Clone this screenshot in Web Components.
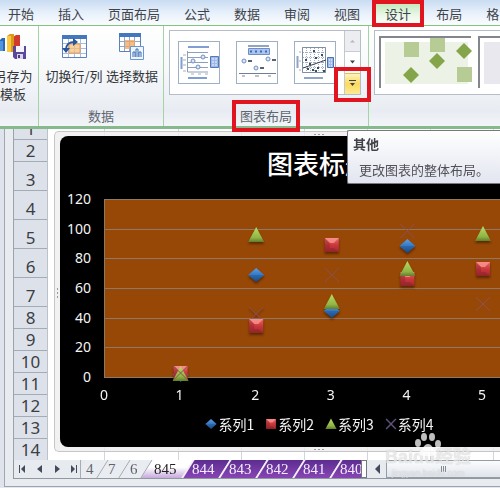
<!DOCTYPE html>
<html lang="zh-CN">
<head>
<meta charset="utf-8">
<title>图表布局</title>
<style>
  html, body { margin: 0; }
  body { font: 13px/18px "Noto Sans CJK SC", "Liberation Sans", sans-serif; color: #404348; overflow: hidden; background: #e4e8ee; }
</style>
</head>
<body>
<excel-window></excel-window>

<script>
const define = (name, html) => {
  const template = document.createElement('template');
  template.innerHTML = html;
  customElements.define(name, class extends HTMLElement {
    constructor() {
      super();
      this.attachShadow({ mode: 'open' }).append(template.content.cloneNode(true));
    }
  });
};

define('mark-box', `
<style>
  :host { display: block; position: absolute; inset: 0; border: 4px solid #e0151f; box-sizing: border-box; pointer-events: none; z-index: 3; }
</style>`);

define('ribbon-tab', `
<style>
  :host { display: block; position: relative; flex: none; }
  button { all: unset; display: block; padding: 3px 12px 0; height: 22px; font: inherit; white-space: nowrap; color: #3f434a; }
  :host([selected]) { border: 1px solid #8ec98e; border-width: 0 1px; background: linear-gradient(#b8e3b0, #eaf7e6 60%, #fff); }
</style>
<button role="tab" type="button"><slot></slot></button><slot name="mark"></slot>`);

define('ribbon-tabs', `
<style>
  :host { display: block; border-bottom: 1px solid #7fc67f; background: linear-gradient(#c8dcf2, #e4eefa 45%, #fbfdff); }
  nav { display: flex; }
  ribbon-tab:first-child { margin-left: -4px; }
  ribbon-tab mark-box { inset: 0 -1px -2px; }
</style>
<nav role="tablist">
  <ribbon-tab>开始</ribbon-tab><ribbon-tab>插入</ribbon-tab><ribbon-tab>页面布局</ribbon-tab><ribbon-tab>公式</ribbon-tab><ribbon-tab>数据</ribbon-tab><ribbon-tab>审阅</ribbon-tab><ribbon-tab>视图</ribbon-tab><ribbon-tab selected>设计<mark-box slot="mark"></mark-box></ribbon-tab><ribbon-tab>布局</ribbon-tab><ribbon-tab>格式</ribbon-tab>
</nav>`);

define('ribbon-group', `
<style>
  :host { display: flex; flex-direction: column; justify-content: space-between; box-sizing: border-box; height: 100px; border-right: 1px solid #a5d3a5; flex: none; }
  .body { display: flex; }
  footer { text-align: center; color: #5f6670; height: 20px; line-height: 20px; }
  footer span { position: relative; display: inline-block; }
  ::slotted(mark-box) { inset: -6px -8px -6px; }
</style>
<div class="body"><slot></slot></div>
<footer><span><slot name="label"></slot><slot name="mark"></slot></span></footer>`);

define('ribbon-command', `
<style>
  :host { display: block; }
  button { all: unset; display: flex; flex-direction: column; align-items: center; gap: 6px; width: 100%; padding-top: 7px; font: inherit; text-align: center; white-space: nowrap; color: #33363b; }
</style>
<button type="button"><slot name="icon"></slot><span><slot></slot></span></button>`);

define('layout-gallery', `
<style>
  :host { display: flex; border: 1px solid #b7bdc6; background: #fff; height: 63px; box-sizing: content-box; }
  .items { display: flex; gap: 16px; padding: 10px 8px; }
  button { all: unset; display: block; }
  .items button { width: 40px; height: 41px; border: 1px solid #9fb0c4; }
  .items svg { display: block; }
  .scroll { display: flex; flex-direction: column; width: 15px; border-left: 1px solid #c3c8cf; }
  .scroll button { position: relative; flex: 1; display: flex; align-items: center; justify-content: center; background: #fff; }
  .scroll button:first-child { background: #ebedf0; }
  .scroll button + button { border-top: 1px solid #c9cdd3; }
  .scroll .more { background: linear-gradient(#fdf3bd, #fbd95f 50%, #fdea94); border-color: #e0bd55; }
  mark-box { inset: -7px -11px -8px; }
</style>
<div class="items">
  <button type="button" aria-label="布局 1"><svg width="40" height="41" fill="none" stroke="#6f8fc4">
    <path d="M9 5h21M9 36h19" stroke="#7f9fd2" stroke-width="2"/><path d="M8.500 9v21H29M8 10.500h21M8 15.500h21M8 20.500h21M8 25.500h21" stroke="#8ea0b8"/>
    <path d="M2.500 15v12" stroke="#7f9fd2" stroke-width="2"/><path d="M4 13h3M4 18h3M4 23h3M4 29h3M12 32h3M19 32h3M26 32h3" stroke="#a8afb9"/>
    <g fill="#dce8f8"><circle cx="14" cy="19" r="2"/><circle cx="24" cy="15" r="2"/><circle cx="19" cy="25" r="2"/></g>
    <path d="M31.500 14.500h8v11h-8z" fill="#9db9ea" stroke="#5578b8"/><path d="M33 17h5M33 20h5M33 23h5" stroke="#eef4ff" stroke-dasharray="2 1"/></svg></button>
  <button type="button" aria-label="布局 2"><svg width="40" height="41" fill="none" stroke="#6f8fc4">
    <path d="M11 4h21" stroke="#8fa5c4" stroke-width="2"/><path d="M11.500 6.500h21v6h-21z" fill="#a9c4f0"/><path d="M13 9.500h18" stroke="#436bab" stroke-width="2" stroke-dasharray="2 3"/>
    <g fill="#dce8f8"><circle cx="7" cy="19" r="2"/><circle cx="31" cy="17" r="2"/><circle cx="19" cy="26" r="2"/></g>
    <path d="M11 19h4M35 18h4M23 26h4" stroke="#5a6470" stroke-width="2"/><path d="M2 31.500h37" stroke="#6f7f95"/><path d="M5 34h3M18 34h4M31 34h3" stroke="#7b8692"/></svg></button>
  <button type="button" aria-label="布局 3"><svg width="40" height="41" fill="none" stroke="#a3afbd">
    <path d="M7.500 5.500h23v25h-23zM11.500 6v24M15.500 6v24M19.500 6v24M23.500 6v24M27.500 6v24M8 10.500h22M8 15.500h22M8 20.500h22M8 25.500h22" stroke-dasharray="1 1"/>
    <path d="M7.500 5.500h23v25h-23z" stroke="#7f8ea1"/><path d="M8 26 31 18" stroke="#39424e"/>
    <g fill="#374c66" stroke="none"><path d="M18 8h2v2h-2zM26 12h2v2h-2zM10 17h2v2h-2zM20 15h2v2h-2zM14 21h2v2h-2zM12 26h2v2h-2zM17 27h2v2h-2zM22 25h2v2h-2zM28 28h2v2h-2zM20 28h2v2h-2z"/></g>
    <path d="M2.500 14v12M9 36h19" stroke="#8fa5c4" stroke-width="2"/><path d="M4 10h2M4 19h2M4 28h2" stroke="#a8afb9"/>
    <path d="M32.500 15.500h6v10h-6z" fill="#9db9ea" stroke="#4d70b4"/><path d="M34 18h4M34 21h4M34 24h4" stroke="#fff" stroke-dasharray="1 1"/></svg></button>
</div>
<div class="scroll">
  <button type="button" aria-label="上一行"><svg width="7" height="4"><path d="M1 3.500 3.500 1 6 3.500z" fill="#b3b6bb"/></svg></button>
  <button type="button" aria-label="下一行"><svg width="7" height="4"><path d="M1 .5h5L3.500 3.500z" fill="#3f4349"/></svg></button>
  <button type="button" class="more" aria-label="其他"><svg width="7" height="7"><path d="M0 0h7v1H0zM1 3h5L3.500 6z" fill="#3f4349"/></svg><mark-box></mark-box></button>
</div>`);

define('style-gallery', `
<style>
  :host { display: flex; gap: 7px; flex: 1; min-width: 0; box-sizing: border-box; height: 65px; padding: 5px 0 0 4px; border: 1px solid #b7bdc6; border-right: 0; background: #fff; overflow: hidden; }
  button { all: unset; flex: none; height: 46px; width: 86px; padding: 4px 0 0 4px; border: solid #83878d; border-width: 2px 0 0 2px; }
  svg { display: block; }
</style>
<button type="button" aria-label="样式 1"><svg width="87" height="47" overflow="visible"><path d="M0 0h83v42H0z" fill="#edf2e7"/><path d="M19 0h15v15H19zM45-4h15v14H45zM72 25h15v15H72z" fill="#b7cc94"/><path d="M52 11l8 8-8 8-8-8zM79 1l8 8-8 8-8-8zM26 25l8 8-8 8-8-8z" fill="#84a54a"/></svg></button>
<button type="button" aria-label="样式 2"><svg width="87" height="47"><path d="M0 0h83v42H0z" fill="#e9e8ee"/><path d="M26 25l8 8-8 8-8-8z" fill="#777"/></svg></button>`);

define('excel-ribbon', `
<style>
  :host { display: block; border-bottom: 3px solid #86b98c; }
  .groups { display: flex; background: linear-gradient(#fff, #f6f8fa 45%, #e8ecf2 85%, #f2f5f8); }
  .save { width: 39px; }
  .save ribbon-command { width: 26px; }
  .data { width: 125px; }
  .data ribbon-command:first-child { margin-left: 6px; }
  .data ribbon-command { width: 58px; }
  .layout { width: 205px; }
  layout-gallery { margin: 4px 0 0 5px; }
  .style { flex: 1; min-width: 0; border: 0; }
  style-gallery { margin: 4px 0 0 5px; }
</style>
<ribbon-tabs></ribbon-tabs>
<div class="groups">
  <ribbon-group class="save">
    <ribbon-command>另存为<br>模板
      <svg slot="icon" width="28" height="28"><path d="M14 4l3-2h4v16h-7z" fill="#d23b2c"/><path d="M0 8l3-3h3v13H0z" fill="#2c67b6"/><path d="M0 8h4v10H0z" fill="#4f96df"/><path d="M8 3l3-2h4v18H8z" fill="#d89a17"/><path d="M8 3h4v16H8z" fill="#f8c940"/><path d="M14 13h13v13H16l-2-2z" fill="#5c489b"/><path d="M17 13h8v6h-8z" fill="#f5f3fb"/><path d="M18 21h6v5h-6z" fill="#d9d5e9"/><path d="M19 22h2v3h-2z" fill="#4b3c83"/></svg>
    </ribbon-command>
  </ribbon-group>
  <ribbon-group class="data">
    <ribbon-command>切换行/列
      <svg slot="icon" width="28" height="28"><path d="M2.500 2.500h24v22h-24z" fill="#fff" stroke="#5b82bd"/><path d="M2 2h25v4H2z" fill="#4577bf"/><path d="M8.500 6v18M14.500 6v18M20.500 6v18M3 10.500h23M3 15.500h23M3 20.500h23" stroke="#a8bdd9"/><path d="M9 11h11v9H9z" fill="#f5bf7d" fill-opacity=".75" stroke="#e69e56"/><path d="M6 17c0-7 4-8 9-8" fill="none" stroke="#28559c" stroke-width="2"/><path d="M13 5l5 4-5 4zM2 15h8l-4 5z" fill="#28559c"/></svg>
    </ribbon-command>
    <ribbon-command>选择数据
      <svg slot="icon" width="28" height="28"><path d="M1.500 1.500h21v17h-21z" fill="#fff" stroke="#5b82bd"/><path d="M1 0h22v4H1z" fill="#4577bf"/><path d="M6.500 4v14M11.500 4v14M16.500 4v14M2 8.500h20M2 13.500h20" stroke="#8ea9cf"/><path d="M7 7h10v9H7z" fill="#f3a65b" fill-opacity=".75"/><path d="M12.500 13.500h13v13h-13z" fill="#eef5ff" stroke="#6c96cf"/><path d="M15 24v-5h2v5M18 24v-8h2v8M21 24v-5h2v5" fill="none" stroke="#3d6cad"/></svg>
    </ribbon-command>
    <span slot="label">数据</span>
  </ribbon-group>
  <ribbon-group class="layout">
    <layout-gallery></layout-gallery>
    <span slot="label">图表布局</span><mark-box slot="mark"></mark-box>
  </ribbon-group>
  <ribbon-group class="style"><style-gallery></style-gallery></ribbon-group>
</div>`);

define('tool-tip', `
<style>
  :host { display: block; padding: 4px 5px 4px; border: 1px solid #767a80; border-right: 0; border-radius: 2px 0 0 2px; background: linear-gradient(#fff, #e3e5f0); box-shadow: 3px 4px 3px #0006; box-sizing: border-box; }
  strong { display: block; }
  p { margin: 8px 0 0 6px; white-space: nowrap; color: #515157; }
</style>
<strong><slot name="title"></slot></strong><p><slot></slot></p>`);

define('row-headers', `
<style>
  :host { display: block; }
  ol { list-style: none; margin: 0; padding: 0; font: 17px/20px "Noto Sans", sans-serif; color: #3b3e43; text-align: center; }
  li { display: flex; align-items: flex-end; justify-content: center; box-sizing: border-box; height: 22px; border-bottom: 1px solid #a4abb5; }
  li:first-child { height: 11px; overflow: hidden; }
  li.tall { height: 29px; }
</style>
<ol><li>1</li><li>2</li><li class="tall">3</li><li class="tall">4</li><li class="tall">5</li><li class="tall">6</li><li class="tall">7</li><li>8</li><li>9</li><li>10</li><li>11</li><li>12</li><li>13</li><li>14</li></ol>`);

const gradients = `
<linearGradient id="gb" x1="0" y1="0" x2="0" y2="1"><stop offset="0" stop-color="#5d9fe6"/><stop offset=".5" stop-color="#3478c4"/><stop offset="1" stop-color="#1d4c89"/></linearGradient>
<linearGradient id="gr" x1="0" y1="0" x2="0" y2="1"><stop offset="0" stop-color="#ea6668"/><stop offset=".5" stop-color="#c9383d"/><stop offset="1" stop-color="#a3292d"/></linearGradient>
<linearGradient id="gg" x1="0" y1="0" x2="0" y2="1"><stop offset="0" stop-color="#b7dc66"/><stop offset=".7" stop-color="#91b544"/><stop offset="1" stop-color="#627d2c"/></linearGradient>
<g id="b"><path d="M0-7 8 0 0 7-8 0z" fill="url(#gb)"/><path d="M-8 0h16L0 7z" fill="#173f76" fill-opacity=".25"/></g>
<g id="r"><path d="M-7-7H7V7H-7z" fill="url(#gr)"/><path d="M-7-7H7L2-2h-4z" fill="#ff9c96" fill-opacity=".7"/><path d="M-7-7-2-2v5l-5 4zM-7 7l5-4h4l5 4z" fill="#721b22" fill-opacity=".3"/></g>
<g id="g"><path d="M0-8 8 7H-8z" fill="url(#gg)"/></g>
<path id="x" d="M-7-7 7 7M7-7-7 7" stroke="#8c5152" stroke-width="1" fill="none"/>`;

define('legend-item', `
<style>
  :host { display: flex; align-items: center; }
  .b, .r, .g, .x { display: none; }
  .defs { position: absolute; }
  :host([kind=b]) .b, :host([kind=r]) .r, :host([kind=g]) .g, :host([kind=x]) .x { display: block; }
</style>
<svg class="defs" width="0" height="0"><defs>${gradients}</defs></svg>
<svg class="b" width="14" height="14" viewBox="-10 -10 20 20"><use href="#b"/></svg>
<svg class="r" width="14" height="14" viewBox="-10 -10 20 20"><use href="#r"/></svg>
<svg class="g" width="14" height="14" viewBox="-10 -10 20 20"><use href="#g"/></svg>
<svg class="x" width="14" height="14" viewBox="-10 -10 20 20"><path d="M-7-7 7 7M7-7-7 7" stroke="#5f527c" stroke-width="2"/></svg>
<slot></slot>`);

define('scatter-chart', `
<style>
  :host { display: block; background: #000; color: #f4f4f4; border-radius: 8px 0 0 8px; box-sizing: border-box; height: 311px; padding-top: 9px; overflow: hidden; }
  h1 { margin: 0 0 8px; padding-left: 78px; text-align: center; font-size: 26px; line-height: 36px; font-weight: 500; color: #fff; }
  .grid { display: grid; grid-template-columns: 31px 1fr; column-gap: 13px; font: 14px/20px "Noto Sans", sans-serif; }
  .y { display: flex; flex-direction: column; justify-content: space-between; height: 198px; text-align: right; }
  .plot { margin-top: 10px; height: 179px; box-sizing: border-box; border: solid #8e7967; border-width: 1px 0 1px 1px; background: #974706; padding-right: 17px; }
  .plot svg { display: block; width: 100%; height: 177px; overflow: visible; }
  .x { display: grid; grid-template-columns: repeat(5, 1fr); grid-column: 2; padding-right: 18px; margin-top: -2px; }
  .x span { grid-row: 1; width: 20px; margin-left: -10px; text-align: center; }
  .x span:nth-child(5), .x span:last-child { grid-column: 5; }
  .x span:last-child { justify-self: end; margin-right: -10px; }
  .legend { display: flex; justify-content: center; gap: 10px; padding-left: 78px; margin-top: 9px; font-size: 14px; line-height: 20px; }
</style>
<h1>图表标题</h1>
<div class="grid">
  <div class="y"><span>120</span><span>100</span><span>80</span><span>60</span><span>40</span><span>20</span><span>0</span></div>
  <div class="plot"><svg><defs>${gradients}</defs>
    <g stroke="#8e7967"><line x2="110%" y1="29.500" y2="29.500"/><line x2="110%" y1="58.500" y2="58.500"/><line x2="110%" y1="88.500" y2="88.500"/><line x2="110%" y1="118.500" y2="118.500"/><line x2="110%" y1="147.500" y2="147.500"/></g>
    <g style="filter:drop-shadow(0 2px 1px #0006)">
    <use href="#b" x="20%" y="175"/><use href="#r" x="20%" y="173"/><use href="#g" x="20%" y="174"/>
    <use href="#b" x="40%" y="75"/><use href="#x" x="40%" y="114"/><use href="#r" x="40%" y="126"/><use href="#g" x="40%" y="35"/>
    <use href="#b" x="60%" y="111"/><use href="#r" x="60%" y="45"/><use href="#g" x="60%" y="102"/>
    <use href="#b" x="80%" y="46"/><use href="#r" x="80%" y="79"/><use href="#g" x="80%" y="69"/>
    <use href="#r" x="100%" y="69"/><use href="#g" x="100%" y="34"/></g>
    <use href="#x" x="20%" y="173"/><use href="#x" x="60%" y="75"/><use href="#x" x="80%" y="31"/><use href="#x" x="100%" y="104"/>
  </svg></div>
  <div class="x"><span>0</span><span>1</span><span>2</span><span>3</span><span>4</span><span>5</span></div>
</div>
<div class="legend"><legend-item kind="b">系列1</legend-item><legend-item kind="r">系列2</legend-item><legend-item kind="g">系列3</legend-item><legend-item kind="x">系列4</legend-item></div>`);

define('sheet-tab', `
<style>
  :host { display: block; flex: none; width: 37px; }
  button { all: unset; position: relative; display: block; box-sizing: border-box; width: 100%; height: 18px; padding-left: 3px; font: 15px/18px "Liberation Serif", serif; color: #f5edff; z-index: 0; }
  button::before { content: ""; position: absolute; inset: 0; z-index: -1; transform: skewX(-32deg); border-right: 2px solid #f3eff8; background: linear-gradient(#5c2d90, #8745b4); box-sizing: border-box; }
  :host([kind=plain]) { width: 22px; }
  :host([kind=plain]) button { color: #60646a; padding-left: 5px; }
  :host([kind=plain]) button::before { background: #e9edf2; border-right: 1px solid #999ea6; }
  :host([kind=current]) { width: 42px; }
  :host([kind=current]) button { color: #222; padding-left: 7px; }
  :host([kind=current]) button::before { background: linear-gradient(#fff 40%, #c7a9dc); }
</style>
<button type="button" role="tab"><slot></slot></button>`);

define('sheet-bar', `
<style>
  :host { display: flex; height: 18px; border-bottom: 1px solid #9298a0; background: #e7ebf0; }
  button { all: unset; }
  nav { display: flex; align-items: center; justify-content: space-between; width: 61px; padding: 0 1px 0 4px; box-sizing: content-box; border-right: 1px solid #a7adb5; }
  nav svg, .left svg { display: block; fill: #424b59; }
  .tabs { display: flex; width: 280px; overflow: hidden; }
  .split { width: 4px; border: 1px solid #73777e; background: #fff; margin-right: 2px; }
  .left { display: flex; align-items: center; justify-content: center; width: 17px; }
  .thumb { flex: 1; display: flex; align-items: center; justify-content: center; gap: 1px; border: 1px solid #969ca5; border-right: 0; background: linear-gradient(#fbfcfd, #dfe4eb); }
  .thumb i { width: 1px; height: 6px; background: #858c96; }
</style>
<nav>
  <button type="button" aria-label="第一张"><svg width="10" height="8"><path d="M1 0h1v8H1zM7 0v8L3 4z"/></svg></button>
  <button type="button" aria-label="上一张"><svg width="10" height="8"><path d="M7 0v8L2 4z"/></svg></button>
  <button type="button" aria-label="下一张"><svg width="10" height="8"><path d="M3 0v8l5-4z"/></svg></button>
  <button type="button" aria-label="最后一张"><svg width="10" height="8"><path d="M7 0h1v8H7zM2 0v8l4-4z"/></svg></button>
</nav>
<div class="tabs" role="tablist"><sheet-tab kind="plain">4</sheet-tab><sheet-tab kind="plain">7</sheet-tab><sheet-tab kind="plain">6</sheet-tab><sheet-tab kind="current">845</sheet-tab><sheet-tab>844</sheet-tab><sheet-tab>843</sheet-tab><sheet-tab>842</sheet-tab><sheet-tab>841</sheet-tab><sheet-tab>840</sheet-tab></div>
<div class="split"></div>
<button class="left" type="button" aria-label="向左滚动"><svg width="7" height="10"><path d="M6 0v10L1 5z"/></svg></button>
<div class="thumb"><i></i><i></i><i></i></div>`);

define('water-mark', `
<style>
  :host { display: block; width: 86px; color: #ffffffa0; pointer-events: none; text-shadow: 0 0 1px #7777; white-space: nowrap; text-align: center; }
  svg { display: block; margin: 0 auto; fill: #fff; opacity: .75; }
  b { display: block; margin-top: -9px; font: bold 18px/20px "Liberation Sans", "Noto Sans CJK SC", sans-serif; }
  small { display: block; font: 9px/12px "Liberation Sans", sans-serif; color: #ffffff90; }
</style>
<svg width="28" height="24"><ellipse cx="4" cy="11" rx="3" ry="4"/><ellipse cx="10" cy="5" rx="3" ry="4"/><ellipse cx="18" cy="5" rx="3" ry="4"/><ellipse cx="24" cy="12" rx="3" ry="4"/><path d="M14 12c4 0 5 5 8 7 3 4-1 5-8 5s-11-1-8-5c3-2 4-7 8-7z"/></svg>
<b>Baidu经验</b><small>jingyan.baidu.com</small>`);

define('excel-sheet', `
<style>
  :host { display: block; position: relative; padding-left: 4px; background: #dfe4ec; overflow: hidden; }
  .pane { padding: 0 0 7px 8px; border-left: 1px solid #a0a7b1; border-bottom: 1px solid #9da3ac; background: #e8ebf0; }
  .cells { display: grid; grid-template-columns: 34px minmax(0, 1fr); border-left: 1px solid #9ba2ac; }
  row-headers { background: #dde2ea; border-right: 1px solid #bcc2ca; height: 331px; overflow: hidden; box-sizing: border-box; }
  .page { padding: 2px 0 0 6px; background: repeating-linear-gradient(90deg, #0000 0 62px, #d3d5d8 62px 63px) 68px 0, #fff; }
  .frame { position: relative; padding: 4px 0 4px 5px; border: 1px solid #c4c6ca; border-right: 0; border-radius: 5px 0 0 5px; background: #eeeeefd0; }
  .grip { position: absolute; display: block; width: 12px; height: 3px; background: radial-gradient(circle, #999 1px, #0000 1px) 0 0 / 4px 3px; }
  .top { top: 1px; left: 258px; } .bottom { bottom: 0; left: 258px; }
  .side { left: 1px; top: 155px; width: 3px; height: 12px; background-size: 3px 4px; }
  sheet-bar { border-left: 1px solid #9298a0; }
  tool-tip { position: absolute; left: 347px; right: 0; top: 1px; }
  water-mark { position: absolute; left: 385px; bottom: 8px; }
</style>
<div class="pane">
  <div class="cells"><row-headers></row-headers>
    <div class="page"><div class="frame"><i class="grip top"></i><i class="grip side"></i><scatter-chart></scatter-chart><i class="grip bottom"></i></div></div>
  </div>
  <sheet-bar></sheet-bar>
</div>
<tool-tip><span slot="title">其他</span>更改图表的整体布局。</tool-tip>
<water-mark></water-mark>`);

define('excel-window', `
<style>:host { display: block; }</style>
<excel-ribbon></excel-ribbon><excel-sheet></excel-sheet>`);
</script>
</body>
</html>
